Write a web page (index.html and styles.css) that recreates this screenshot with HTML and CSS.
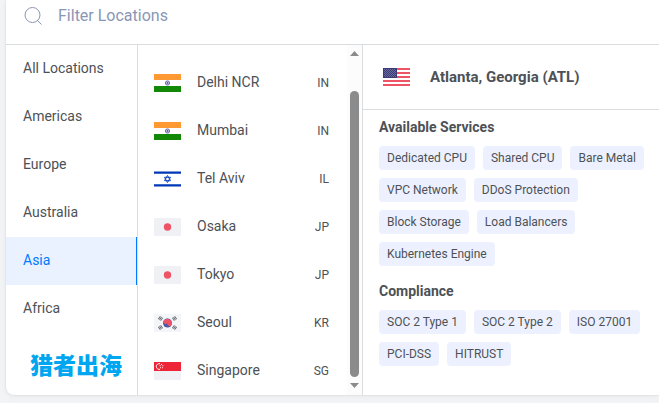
FILE: index.html
```html
<!DOCTYPE html>
<html lang="en">
<head>
    <meta charset="UTF-8">
    <meta name="viewport" content="width=device-width, initial-scale=1.0">
    <title>Locations</title>
    <link rel="stylesheet" href="styles.css">
</head>
<body>
    <!-- Shared flag drawings -->
    <svg class="sprite" width="0" height="0" aria-hidden="true">
        <symbol id="flag-in" viewBox="0 0 27 18">
            <path fill="#fff" d="M0 0h27v18H0z"/>
            <path fill="#ff9933" d="M0 0h27v6H0z"/>
            <path fill="#128807" d="M0 12h27v6H0z"/>
            <circle cx="13.5" cy="9" r="2.1" fill="#c5c5e2" stroke="#6c6cb4" stroke-width="1"/>
            <circle cx="13.5" cy="9" r="0.8" fill="#35358f"/>
        </symbol>
        <symbol id="flag-il" viewBox="0 0 27 18">
            <path fill="#fff" d="M0 0h27v18H0z"/>
            <path fill="#0038b8" d="M0 1.4h27v2.4H0zM0 14.2h27v2.4H0z"/>
            <path fill="none" stroke="#0038b8" stroke-width="0.9" d="M13.5 5.5l3 5.2h-6zM13.5 12.5l3-5.2h-6z"/>
        </symbol>
        <symbol id="flag-jp" viewBox="0 0 27 18">
            <path fill="#f0f1f5" d="M0 0h27v18H0z"/>
            <circle cx="13.5" cy="9" r="3.7" fill="#ef5466"/>
        </symbol>
        <symbol id="flag-kr" viewBox="0 0 27 18">
            <path fill="#f4f5f8" d="M0 0h27v18H0z"/>
            <circle cx="13.5" cy="9" r="4.5" fill="#4a5aa8"/>
            <path fill="#ef5466" d="M9.6 6.8a4.5 4.5 0 0 1 7.8 4.4a2.25 2.25 0 0 1-3.9-2.2a2.25 2.25 0 0 1-3.9-2.2z"/>
            <g fill="none" stroke="#666b73" stroke-width="3.6" stroke-dasharray="0.9 0.5">
                <path d="M5 3.4l3 2.1M22 3.4l-3 2.1M5 14.6l3-2.1M22 14.6l-3-2.1"/>
            </g>
        </symbol>
        <symbol id="flag-sg" viewBox="0 0 27 18">
            <path fill="#f0f1f5" d="M0 0h27v18H0z"/>
            <path fill="#ee2536" d="M0 0h27v9H0z"/>
            <path fill="none" stroke="#fff" stroke-width="1" d="M6 1.7a2.9 2.9 0 1 0 0 5.6"/>
            <path fill="#fff" d="M7 2h1v1H7zM5.6 3.3h1v1h-1zM8.4 3.3h1v1h-1zM6 5.2h1v1H6zM7.9 5.2h1v1h-1z"/>
        </symbol>
        <symbol id="flag-us" viewBox="0 0 27 18">
            <path fill="#fff" d="M0 0h27v18H0z"/>
            <path fill="#ef5466" d="M0 0h27v2H0zM0 4h27v2H0zM0 8h27v2H0zM0 12h27v2H0zM0 16h27v2H0z"/>
            <path fill="#3c3b75" d="M0 0h14v10H0z"/>
            <path stroke="#6a699b" stroke-width="1" stroke-dasharray="1 1" d="M1 1.5h12M2 2.5h11M1 3.5h12M2 4.5h11M1 5.5h12M2 6.5h11M1 7.5h12M2 8.5h11"/>
        </symbol>
    </svg>

    <main class="card">
        <form class="search">
            <label for="filter" aria-label="Filter Locations">
                <svg class="search-icon" viewBox="0 0 18 18">
                    <circle cx="8.5" cy="8" r="7.5"/>
                    <path d="M13 13l4.5 4.5"/>
                </svg>
            </label>
            <input type="text" id="filter" class="search-input" placeholder="Filter Locations">
        </form>

        <div class="columns">
            <nav class="regions">
                <button type="button" class="region">All Locations</button>
                <button type="button" class="region">Americas</button>
                <button type="button" class="region">Europe</button>
                <button type="button" class="region">Australia</button>
                <button type="button" class="region active">Asia</button>
                <button type="button" class="region">Africa</button>
                <p class="brand" lang="zh">猎者出海</p>
            </nav>

            <div class="cities">
                <div class="city-list">
                    <button type="button" class="city"><svg class="flag"><use href="#flag-in"/></svg><span class="city-name">Delhi NCR</span><span class="code">IN</span></button>
                    <button type="button" class="city"><svg class="flag"><use href="#flag-in"/></svg><span class="city-name">Mumbai</span><span class="code">IN</span></button>
                    <button type="button" class="city"><svg class="flag"><use href="#flag-il"/></svg><span class="city-name">Tel Aviv</span><span class="code">IL</span></button>
                    <button type="button" class="city"><svg class="flag"><use href="#flag-jp"/></svg><span class="city-name">Osaka</span><span class="code">JP</span></button>
                    <button type="button" class="city"><svg class="flag"><use href="#flag-jp"/></svg><span class="city-name">Tokyo</span><span class="code">JP</span></button>
                    <button type="button" class="city"><svg class="flag"><use href="#flag-kr"/></svg><span class="city-name">Seoul</span><span class="code">KR</span></button>
                    <button type="button" class="city"><svg class="flag"><use href="#flag-sg"/></svg><span class="city-name">Singapore</span><span class="code">SG</span></button>
                </div>
                <div class="scrollbar" aria-hidden="true">
                    <svg class="arrow" viewBox="0 0 9 5"><path d="M0 5l4.5-5L9 5z"/></svg>
                    <div class="thumb"></div>
                    <svg class="arrow" viewBox="0 0 9 5"><path d="M0 0l4.5 5L9 0z"/></svg>
                </div>
            </div>

            <section class="detail">
                <header class="detail-header">
                    <svg class="flag"><use href="#flag-us"/></svg>
                    <h1>Atlanta, Georgia (ATL)</h1>
                </header>
                <div class="detail-body">
                    <h2>Available Services</h2>
                    <ul class="tags">
                        <li>Dedicated CPU</li>
                        <li>Shared CPU</li>
                        <li>Bare Metal</li>
                        <li>VPC Network</li>
                        <li>DDoS Protection</li>
                        <li>Block Storage</li>
                        <li>Load Balancers</li>
                        <li>Kubernetes Engine</li>
                    </ul>
                    <h2>Compliance</h2>
                    <ul class="tags">
                        <li>SOC 2 Type 1</li>
                        <li>SOC 2 Type 2</li>
                        <li>ISO 27001</li>
                        <li>PCI-DSS</li>
                        <li>HITRUST</li>
                    </ul>
                </div>
            </section>
        </div>
    </main>
</body>
</html>
```
FILE: styles.css
```css
:root {
    --primary-color: #007bfc;
    --active-bg: #ebf2ff;
    --tag-bg: #edf1ff;
    --text-color: #4d5156;
    --muted-color: #8a96b5;
    --border-color: #dadddf;
    --bg-color: #f3f4f6;
}

* {
    margin: 0;
    padding: 0;
    box-sizing: border-box;
}

body {
    background-color: var(--bg-color);
    color: var(--text-color);
    font-family: Roboto, "Noto Sans CJK SC", sans-serif;
    font-size: 14px;
    padding: 0 0 8px 6px;
}

button {
    border: none;
    background: none;
    color: inherit;
    font: inherit;
    text-align: left;
    cursor: pointer;
}

.sprite {
    position: absolute;
}

.card {
    background-color: #fff;
    border-radius: 0 0 0 8px;
    box-shadow: 0 0 2px rgba(0, 0, 0, 0.15), 0 2px 8px rgba(0, 0, 0, 0.04);
    overflow: hidden;
}

.search {
    display: flex;
    align-items: center;
    gap: 16px;
    height: 45px;
    padding: 0 16px 13px 18px;
    border-bottom: 1px solid var(--border-color);
}

.search-icon {
    display: block;
    width: 18px;
    height: 18px;
    fill: none;
    stroke: var(--muted-color);
    stroke-width: 1;
}

.search-input {
    flex: 1;
    border: none;
    outline: none;
    font: inherit;
    font-size: 16px;
    color: var(--text-color);
}

.search-input::placeholder {
    color: var(--muted-color);
}

.columns {
    display: flex;
}

.regions {
    display: flex;
    flex-direction: column;
    flex: 0 0 132px;
    border-right: 1px solid var(--border-color);
}

.region {
    height: 48px;
    padding: 0 17px 2px;
}

.region.active {
    background-color: var(--active-bg);
    color: var(--primary-color);
    border-right: 1px solid var(--primary-color);
}

.brand {
    margin: auto 0;
    padding-left: 24px;
    color: #00a6f0;
    font-family: "Noto Sans CJK SC", sans-serif;
    font-size: 23px;
    font-weight: 900;
    line-height: 24px;
}

.cities {
    display: flex;
    flex: 0 0 225px;
    border-right: 1px solid var(--border-color);
}

.city-list {
    flex: 1;
    padding-top: 14px;
}

.city {
    display: flex;
    align-items: center;
    width: 100%;
    height: 48px;
    padding: 0 18px 0 16px;
}

.flag {
    flex: none;
    width: 27px;
    height: 18px;
    margin-right: 16px;
}

.city-name {
    flex: 1;
    padding-bottom: 2px;
}

.code {
    font-size: 12px;
}

.scrollbar {
    display: flex;
    flex-direction: column;
    align-items: center;
    width: 15px;
    padding: 6px 0 7px;
    background-color: #fcfcfc;
}

.arrow {
    width: 9px;
    height: 5px;
    fill: #8b8b8b;
}

.thumb {
    flex: 1;
    width: 9px;
    margin: 35px 0 6px;
    border-radius: 5px;
    background-color: #8b8b8b;
}

.detail {
    flex: 1;
    min-width: 0;
}

.detail-header {
    display: flex;
    align-items: center;
    height: 65px;
    padding: 0 20px;
    border-bottom: 1px solid var(--border-color);
}

h1 {
    margin-left: 4px;
    font-size: 15px;
    font-weight: 700;
}

.detail-body {
    padding: 8px 8px 12px 16px;
}

h2 {
    margin-bottom: 10px;
    font-size: 14px;
    font-weight: 700;
    line-height: 18px;
}

.tags {
    display: flex;
    flex-wrap: wrap;
    gap: 8px;
    margin-bottom: 16px;
    list-style: none;
}

.tags li {
    padding: 0 8px;
    border-radius: 4px;
    background-color: var(--tag-bg);
    font-size: 12px;
    line-height: 24px;
}
```
